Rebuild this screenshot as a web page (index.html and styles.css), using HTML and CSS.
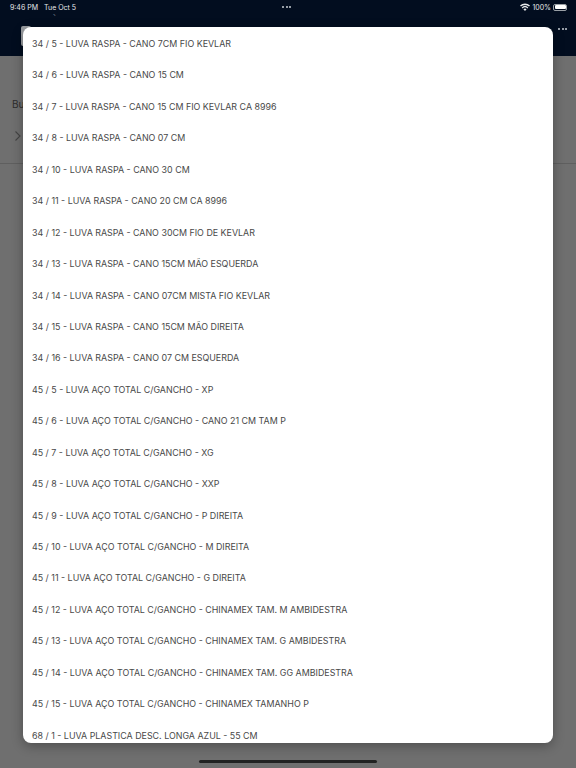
FILE: index.html
```html
<!DOCTYPE html>
<html lang="pt-BR">
<head>
<meta charset="utf-8">
<title>Balanço Potencial</title>
<link rel="stylesheet" href="styles.css">
</head>
<body>
<div class="app">
  <header class="topbar">
    <div class="status">
      <span class="status-left"><span>9:46 PM</span><span>Tue Oct 5</span></span>
      <span class="dots status-dots"><i></i><i></i><i></i></span>
      <span class="status-right">
        <svg class="wifi" width="10" height="8" viewBox="0 0 10 8"><path d="M5 8 3.4 6.2a2.3 2.3 0 0 1 3.2 0zM2.6 5.4 1.700 4.400a4.800 4.800 0 0 1 6.600 0l-.9 1a3.400 3.400 0 0 0-4.800 0zM1 3.600 0 2.600a7.200 7.200 0 0 1 10 0l-1 1a5.800 5.800 0 0 0-8 0z" fill="#e6e8ea"/></svg>
        <span>100%</span>
        <span class="battery"><span class="battery-fill"></span></span>
      </span>
    </div>
    <div class="titlerow">
      <span class="title"><span class="title-text">Balanço Potencial</span></span>
      <span class="dots more"><i></i><i></i><i></i></span>
    </div>
    <div class="back-tile"></div>
  </header>
  <main class="behind">
    <div class="search">Buscar</div>
    <div class="chevron-row">
      <svg width="8" height="12" viewBox="0 0 8 12"><path d="M1.500 1.500 6 6l-4.500 4.500" fill="none" stroke="#444" stroke-width="1.100"/></svg>
    </div>
  </main>
  <div class="home-bar"></div>

  <section class="modal">
    <ul class="list">
      <li>34 / 5 - LUVA RASPA - CANO 7CM FIO KEVLAR</li>
      <li>34 / 6 - LUVA RASPA - CANO 15 CM</li>
      <li>34 / 7 - LUVA RASPA - CANO 15 CM FIO KEVLAR CA 8996</li>
      <li>34 / 8 - LUVA RASPA - CANO 07 CM</li>
      <li>34 / 10 - LUVA RASPA - CANO 30 CM</li>
      <li>34 / 11 - LUVA RASPA - CANO 20 CM CA 8996</li>
      <li>34 / 12 - LUVA RASPA - CANO 30CM FIO DE KEVLAR</li>
      <li>34 / 13 - LUVA RASPA - CANO 15CM MÃO ESQUERDA</li>
      <li>34 / 14 - LUVA RASPA - CANO 07CM MISTA FIO KEVLAR</li>
      <li>34 / 15 - LUVA RASPA - CANO 15CM MÃO DIREITA</li>
      <li>34 / 16 - LUVA RASPA - CANO 07 CM ESQUERDA</li>
      <li>45 / 5 - LUVA AÇO TOTAL C/GANCHO - XP</li>
      <li>45 / 6 - LUVA AÇO TOTAL C/GANCHO - CANO 21 CM TAM P</li>
      <li>45 / 7 - LUVA AÇO TOTAL C/GANCHO - XG</li>
      <li>45 / 8 - LUVA AÇO TOTAL C/GANCHO - XXP</li>
      <li>45 / 9 - LUVA AÇO TOTAL C/GANCHO - P DIREITA</li>
      <li>45 / 10 - LUVA AÇO TOTAL C/GANCHO - M DIREITA</li>
      <li>45 / 11 - LUVA AÇO TOTAL C/GANCHO - G DIREITA</li>
      <li>45 / 12 - LUVA AÇO TOTAL C/GANCHO - CHINAMEX TAM. M AMBIDESTRA</li>
      <li>45 / 13 - LUVA AÇO TOTAL C/GANCHO - CHINAMEX TAM. G AMBIDESTRA</li>
      <li>45 / 14 - LUVA AÇO TOTAL C/GANCHO - CHINAMEX TAM. GG AMBIDESTRA</li>
      <li>45 / 15 - LUVA AÇO TOTAL C/GANCHO - CHINAMEX TAMANHO P</li>
      <li>68 / 1 - LUVA PLASTICA DESC. LONGA AZUL - 55 CM</li>
    </ul>
  </section>
</div>
</body>
</html>
```
FILE: styles.css
```css
* { box-sizing: border-box; }
html, body { margin: 0; padding: 0; }
body { width: 576px; height: 768px; overflow: hidden; font-family: Inter, "Liberation Sans", Arial, sans-serif; background: #6f6f6f; }
.app { position: relative; width: 576px; height: 768px; overflow: hidden; display: flex; flex-direction: column; background: #6f6f6f; }
.topbar { height: 56px; background: #020d1f; color: #e6e8ea; flex: none; position: relative; }
.status { height: 14px; display: flex; justify-content: space-between; align-items: center; padding: 0 9px 0 10px; font-size: 7px; position: relative; }
.status-left { display: flex; gap: 6px; }
.status-right { display: flex; align-items: center; gap: 2px; }
.status-dots { position: absolute; left: 282px; top: 6px; }
.dots { display: flex; gap: 1.500px; }
.dots i { width: 2px; height: 2px; border-radius: 50%; background: #c9ced4; display: block; }
.battery { width: 14px; height: 7px; border: 1px solid #9aa0a6; border-radius: 2px; padding: .5px; display: block; }
.battery-fill { display: block; height: 100%; background: #fff; border-radius: 1px; }
.titlerow { height: 14px; display: flex; justify-content: space-between; align-items: flex-start; padding: 0 9px 0 19px; }
.title { display: block; height: 2px; overflow: hidden; font-size: 12px; line-height: 12px; color: #5d6573; }
.title-text { display: block; margin-top: -10px; }
.more { margin-top: 14px; }
.back-tile { position: absolute; left: 21px; top: 26px; width: 10px; height: 20px; background: #9a9da1; border-radius: 2px; }
.behind { flex: 1; position: relative; color: #2c2c2c; }
.search { font-size: 10px; line-height: 12px; padding: 42px 0 0 12px; }
.chevron-row { padding: 16px 0 0 14px; height: 54px; border-bottom: 1px solid #5f5f5f; }
.home-bar { position: absolute; left: 199px; top: 760px; width: 178px; height: 3px; border-radius: 2px; background: #222; }
.modal { position: absolute; left: 23px; top: 27px; width: 530px; height: 716px; background: #fff; border-radius: 8px; overflow: hidden; box-shadow: 0 3px 12px rgba(0,0,0,.3); }
.list { list-style: none; margin: 0; padding: 1px 0 0 9px; }
.list li { height: 31.450px; line-height: 31.450px; font-size: 8.900px; color: #484848; white-space: nowrap; }
```
